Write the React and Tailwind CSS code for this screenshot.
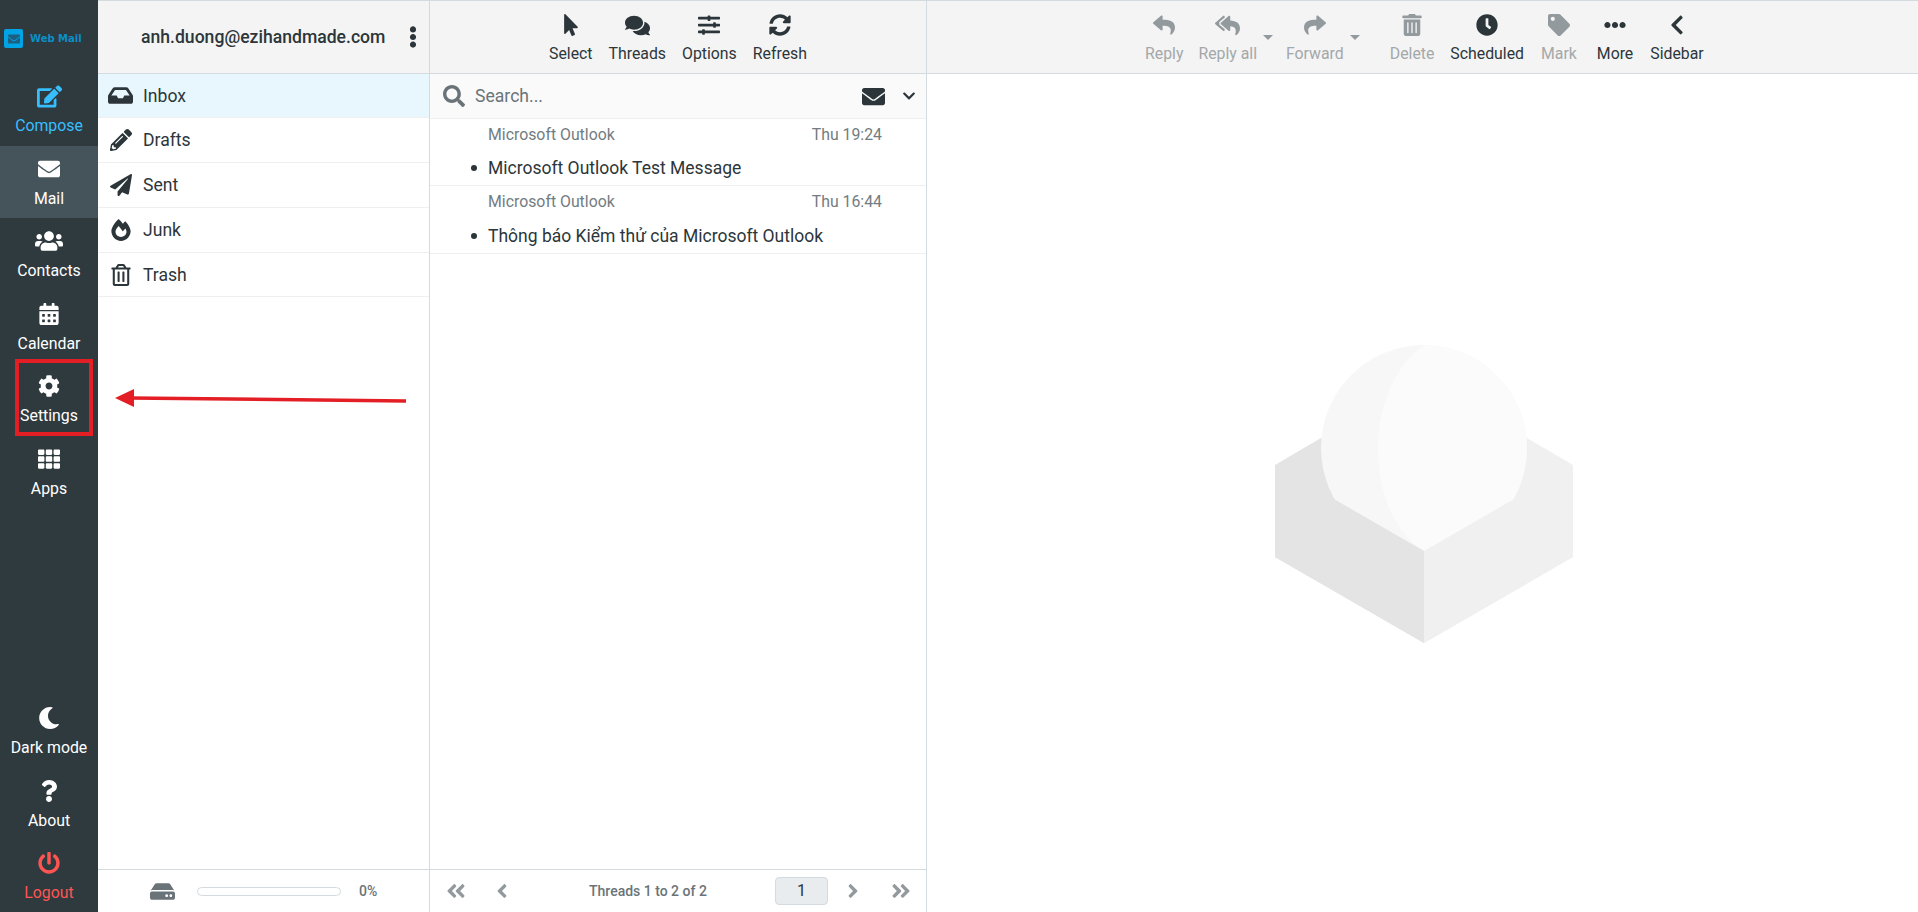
import React from 'react';
import {
  FaEdit, FaEnvelope, FaUsers, FaCalendarAlt, FaCog, FaTh, FaMoon, FaQuestion, FaPowerOff,
  FaInbox, FaPencilAlt, FaPaperPlane, FaFireAlt, FaRegTrashAlt, FaEllipsisV,
  FaMousePointer, FaComments, FaSlidersH, FaSyncAlt, FaSearch, FaChevronDown,
  FaReply, FaReplyAll, FaShare, FaTrashAlt, FaClock, FaTag, FaEllipsisH, FaChevronLeft,
  FaHdd, FaAngleDoubleLeft, FaAngleLeft, FaAngleRight, FaAngleDoubleRight,
} from 'react-icons/fa';

const font = { fontFamily: 'Roboto, sans-serif' };

const folders = [
  { name: 'Inbox', icon: FaInbox, size: 25, cls: 'h-[44px] bg-[#e8f6fd]' },
  { name: 'Drafts', icon: FaPencilAlt, size: 22, cls: 'h-[45px]' },
  { name: 'Sent', icon: FaPaperPlane, size: 22, cls: 'h-[45px]' },
  { name: 'Junk', icon: FaFireAlt, size: 22, cls: 'h-[45px]' },
  { name: 'Trash', icon: FaRegTrashAlt, size: 22, cls: 'h-[44px]' },
];

const messages = [
  { from: 'Microsoft Outlook', time: 'Thu 19:24', subject: 'Microsoft Outlook Test Message', cls: 'h-[67px]', gap: 'mt-[13px]' },
  { from: 'Microsoft Outlook', time: 'Thu 16:44', subject: 'Thông báo Kiểm thử của Microsoft Outlook', cls: 'h-[68px]', gap: 'mt-[14px]' },
];

// react-icons squeezes wide glyphs into a square, so the size is set per icon
function RailItem({ icon: Icon, size = 22, label, active, color = 'text-white' }) {
  return (
    <div className={`h-[72.6px] flex flex-col items-center pt-3 ${color} ${active ? 'bg-[#45545a]' : ''}`}>
      <span className="h-[22px] flex items-center justify-center"><Icon size={size} /></span>
      <span className="mt-[9px] text-[15.84px] leading-5 whitespace-nowrap">{label}</span>
    </div>
  );
}

function ToolButton({ icon: Icon, size = 22, label, muted, className = '' }) {
  return (
    <div className={`flex flex-col items-center shrink-0 ${muted ? 'text-[#939a9d]' : 'text-[#2c363a]'} ${className}`}>
      <span className="h-[22px] flex items-center justify-center"><Icon size={size} /></span>
      <span className={`mt-[8px] text-[15.84px] leading-5 whitespace-nowrap ${muted ? 'text-[#a3a8aa]' : ''}`}>{label}</span>
    </div>
  );
}

function Caret({ className = '' }) {
  return <span className={`w-0 h-0 self-start mt-[21px] border-x-[5px] border-x-transparent border-t-[5px] border-t-[#939a9d] ${className}`} />;
}

function InboxArt() {
  return (
    <svg width="298" height="298" viewBox="0 0 298 298" className="ml-[3px] mt-[2px]">
      <polygon points="0,120 46,93 149,93 149,298 0,212" fill="#e4e4e4" />
      <polygon points="298,120 252,93 149,93 149,298 298,212" fill="#f0f0f0" />
      <circle cx="149" cy="103" r="103" fill="#f7f7f7" />
      <path d="M149,0 A103,103 0 0 1 149,206 C116,186 103,142 103,103 C103,62 120,20 149,0 Z" fill="#fbfbfb" />
      <polygon points="0,120 149,206 149,298 0,212" fill="#e4e4e4" />
      <polygon points="298,120 149,206 149,298 298,212" fill="#f0f0f0" />
    </svg>
  );
}

export default function App() {
  return (
    <div className="relative flex h-[912px] w-[1918px] overflow-hidden bg-white text-[#2c363a]" style={font}>
      {/* RAIL */}
      <aside className="w-[98px] shrink-0 flex flex-col bg-[#2f3a3f]">
        <div className="h-[73px] shrink-0 flex items-center pl-1 pt-[4px] gap-[7px]">
          <div className="w-[19px] h-[19px] rounded-[2px] bg-[#00a4e4] flex items-center justify-center">
            <FaEnvelope size={12} className="text-[#1d5f80]" />
          </div>
          <span className="text-[10px] font-bold text-[#0a8fc9] whitespace-nowrap" style={{ fontFamily: '"DejaVu Sans", sans-serif' }}>Web Mail</span>
        </div>
        <RailItem icon={FaEdit} size={25} label="Compose" color="text-[#37beff]" />
        <RailItem icon={FaEnvelope} label="Mail" active />
        <RailItem icon={FaUsers} size={28} label="Contacts" />
        <RailItem icon={FaCalendarAlt} label="Calendar" />
        <RailItem icon={FaCog} label="Settings" />
        <RailItem icon={FaTh} label="Apps" />
        <div className="mt-auto -mb-px">
          <RailItem icon={FaMoon} label="Dark mode" />
          <RailItem icon={FaQuestion} label="About" />
          <RailItem icon={FaPowerOff} label="Logout" color="text-[#ff5552]" />
        </div>
      </aside>

      {/* FOLDERS */}
      <section className="w-[332px] shrink-0 flex flex-col border-r border-[#d4dbde]">
        <header className="h-[74px] shrink-0 flex items-center bg-[#f4f4f4] border-y border-[#d4dbde] pl-[43px] pr-[5px] justify-between">
          <span className="text-[17.6px] font-medium whitespace-nowrap">anh.duong@ezihandmade.com</span>
          <FaEllipsisV size={22} className="text-[#2c363a]" />
        </header>
        <ul className="flex-1">
          {folders.map(({ name, icon: Icon, size, cls }) => (
            <li key={name} className={`flex items-center border-b border-[#efefef] ${cls}`}>
              <span className="w-[45px] flex justify-center"><Icon size={size} /></span>
              <span className="text-[17.6px] leading-5">{name}</span>
            </li>
          ))}
        </ul>
        <footer className="h-[43px] shrink-0 flex items-center border-t border-[#d4dbde] pl-[52px]">
          <FaHdd size={25} className="text-[#6a7478]" />
          <div className="ml-[22px] w-[144px] h-[9px] rounded-full border border-[#d4dbde]" />
          <span className="ml-[18px] text-[14px] font-medium text-[#6a7478]">0%</span>
        </footer>
      </section>

      {/* MESSAGE LIST */}
      <section className="w-[497px] shrink-0 flex flex-col border-r border-[#d4dbde]">
        <header className="h-[74px] shrink-0 flex justify-center gap-4 pt-[13px] bg-[#f4f4f4] border-y border-[#d4dbde]">
          <ToolButton icon={FaMousePointer} label="Select" />
          <ToolButton icon={FaComments} size={25} label="Threads" />
          <ToolButton icon={FaSlidersH} label="Options" />
          <ToolButton icon={FaSyncAlt} label="Refresh" />
        </header>
        <div className="h-[45px] shrink-0 flex items-center bg-[#fafafa] border-b border-[#efefef] pl-[13px] pr-[10px]">
          <FaSearch size={22} className="text-[#6a7478]" />
          <span className="ml-[10px] flex-1 text-[17.6px] text-[#6a7478]">Search...</span>
          <FaEnvelope size={23} />
          <FaChevronDown size={14} className="ml-[17px]" />
        </div>
        <ul className="flex-1">
          {messages.map((m) => (
            <li key={m.time} className={`${m.cls} border-b border-[#efefef] pl-[58px] pr-11 pt-[6px]`}>
              <div className="flex justify-between text-[15.84px] leading-5 text-[#737c80]">
                <span>{m.from}</span>
                <span>{m.time}</span>
              </div>
              <div className={`relative ${m.gap} text-[17.5px] leading-5`}>
                <span className="absolute -left-[17px] top-[7px] w-[6px] h-[6px] rounded-full bg-[#2c363a]" />
                {m.subject}
              </div>
            </li>
          ))}
        </ul>
        <footer className="h-[43px] shrink-0 flex items-center border-t border-[#d4dbde] text-[#939a9d]">
          <FaAngleDoubleLeft size={22} className="ml-[15px]" />
          <FaAngleLeft size={22} className="ml-[24px]" />
          <span className="ml-[76px] w-[120px] text-[14px] font-medium text-[#6a7478] whitespace-nowrap">Threads 1 to 2 of 2</span>
          <div className="ml-[66px] w-[53px] h-[28px] flex items-center justify-center rounded border border-[#d4dbde] bg-[#e9ecef] text-[16px] text-[#2c363a]">1</div>
          <FaAngleRight size={22} className="ml-[14px]" />
          <FaAngleDoubleRight size={22} className="ml-[26px]" />
        </footer>
      </section>

      {/* CONTENT */}
      <section className="flex-1 flex flex-col min-w-0">
        <header className="h-[74px] shrink-0 flex pl-[218px] pt-[13px] bg-[#f4f4f4] border-y border-[#d4dbde]">
          <ToolButton icon={FaReply} label="Reply" muted />
          <ToolButton icon={FaReplyAll} size={25} label="Reply all" muted className="ml-[15px]" />
          <Caret className="ml-[6px]" />
          <ToolButton icon={FaShare} label="Forward" muted className="ml-[13px]" />
          <Caret className="ml-[6px]" />
          <ToolButton icon={FaTrashAlt} label="Delete" muted className="ml-[30px]" />
          <ToolButton icon={FaClock} label="Scheduled" className="ml-[16px]" />
          <ToolButton icon={FaTag} label="Mark" muted className="ml-[17px]" />
          <ToolButton icon={FaEllipsisH} label="More" className="ml-[20px]" />
          <ToolButton icon={FaChevronLeft} label="Sidebar" className="ml-[17px]" />
        </header>
        <div className="flex-1 flex items-center justify-center">
          <InboxArt />
        </div>
      </section>

      {/* ANNOTATION */}
      <div className="absolute left-[15px] top-[359px] w-[78px] h-[77px] border-4 border-[#e31e24]" />
      <svg className="absolute left-[110px] top-[385px]" width="300" height="26" viewBox="0 0 300 26">
        <polygon points="5,13 24,4 24,22" fill="#e31e24" />
        <line x1="20" y1="13" x2="296" y2="16" stroke="#e31e24" strokeWidth="3.5" />
      </svg>
    </div>
  );
}
